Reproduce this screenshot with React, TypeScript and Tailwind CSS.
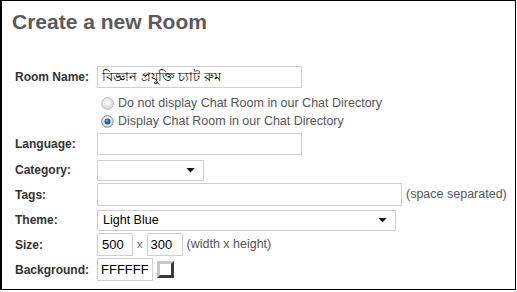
import React from "react";

const font = { fontFamily: '"Liberation Sans", Arial, sans-serif' };

function Radio({ checked }: { checked?: boolean }) {
  return (
    <svg width="13" height="13" viewBox="0 0 13 13" className="shrink-0">
      <defs>
        <radialGradient id={checked ? "rg1" : "rg0"} cx="50%" cy="40%" r="60%">
          <stop offset="0%" stopColor="#ffffff" />
          <stop offset="100%" stopColor="#d4d4d4" />
        </radialGradient>
      </defs>
      <circle cx="6.5" cy="6.5" r="5.8" fill={`url(#${checked ? "rg1" : "rg0"})`} stroke={checked ? "#7f8c99" : "#b9b9b9"} strokeWidth="1" />
      {checked && <circle cx="6.5" cy="6.5" r="3" fill="#1d5fa0" />}
      {checked && <circle cx="6" cy="5.8" r="1.2" fill="#6fa7d9" />}
    </svg>
  );
}

function Arrow() {
  return (
    <svg width="9" height="6" viewBox="0 0 9 6" className="shrink-0">
      <path d="M0.5 1 H8.5 L4.5 5.5 Z" fill="#111" />
    </svg>
  );
}

function Row({ label, children, className = "" }: { label?: string; children?: React.ReactNode; className?: string }) {
  return (
    <div className={`flex items-center ${className}`}>
      <div className="w-[82px] shrink-0 text-[12px] font-bold text-[#333]">{label}</div>
      {children}
    </div>
  );
}

export default function App() {
  return (
    <div className="w-[517px] h-[292px] bg-white" style={font}>
      <div className="w-[516px] h-[290px] border border-l-2 border-black pl-[10px] pt-[9px]">
        <h1 className="text-[21px] font-bold text-[#5a5a5a] leading-[24px]">Create a new Room</h1>

        <div className="pl-[3px] pt-[31px] flex flex-col">
          <Row label="Room Name:" className="h-[23px]">
            <div className="w-[205px] h-[22px] border border-[#cfcfcf] px-[4px] flex items-center text-[13px] text-black">
              বিজ্ঞান প্রযুক্তি চ্যাট রুম
            </div>
          </Row>

          <div className="pl-[86px] pt-[9px] flex flex-col gap-[5px] text-[12.5px] text-[#555]">
            <div className="flex items-center gap-[4px] h-[13px]">
              <Radio />
              <span>Do not display Chat Room in our Chat Directory</span>
            </div>
            <div className="flex items-center gap-[4px] h-[13px]">
              <Radio checked />
              <span>Display Chat Room in our Chat Directory</span>
            </div>
          </div>

          <Row label="Language:" className="h-[23px] mt-[4px]">
            <div className="w-[205px] h-[22px] border border-[#cfcfcf]" />
          </Row>

          <Row label="Category:" className="h-[22px] mt-[4px]">
            <div className="w-[107px] h-[21px] border border-[#cfcfcf] flex items-center justify-end pr-[8px]">
              <Arrow />
            </div>
          </Row>

          <Row label="Tags:" className="h-[23px] mt-[2px]">
            <div className="w-[305px] h-[23px] border border-[#cfcfcf]" />
            <span className="ml-[4px] text-[12.5px] text-[#555]">(space separated)</span>
          </Row>

          <Row label="Theme:" className="h-[22px] mt-[3px]">
            <div className="w-[299px] h-[21px] border border-[#cfcfcf] flex items-center justify-between pl-[5px] pr-[8px] text-[12.5px] text-black">
              <span>Light Blue</span>
              <Arrow />
            </div>
          </Row>

          <Row label="Size:" className="h-[23px] mt-[2px]">
            <div className="w-[36px] h-[23px] border border-[#cfcfcf] flex items-center px-[4px] text-[13px] text-black">500</div>
            <span className="mx-[4px] text-[11px] text-[#666]">x</span>
            <div className="w-[36px] h-[23px] border border-[#cfcfcf] flex items-center px-[3px] text-[13px] text-black">300</div>
            <span className="ml-[4px] text-[12.5px] text-[#555]">(width x height)</span>
          </Row>

          <Row label="Background:" className="h-[23px] mt-[2px]">
            <div className="w-[56px] h-[23px] border border-[#cfcfcf] flex items-center px-[3px] text-[13px] text-black">FFFFFF</div>
            <div className="ml-[4px] w-[17px] h-[17px] bg-white border-[3px] border-t-[#c8c8c8] border-l-[#c8c8c8] border-r-[#3a3a3a] border-b-[#3a3a3a]" />
          </Row>
        </div>
      </div>
    </div>
  );
}
